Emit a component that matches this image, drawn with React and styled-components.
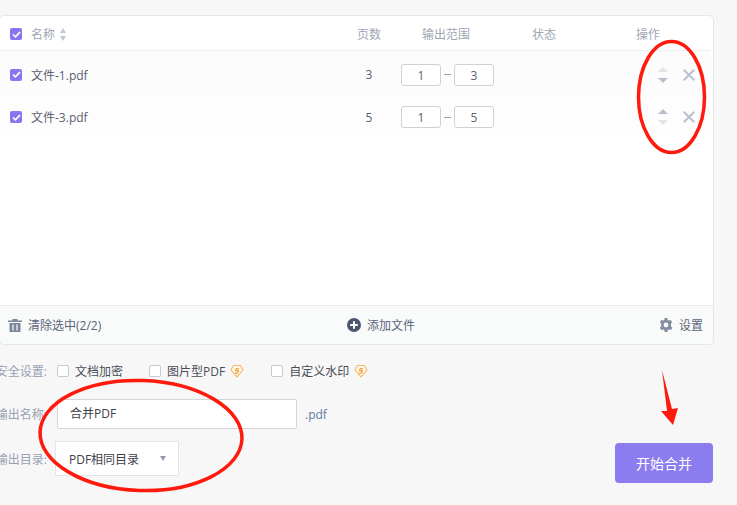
import React from "react";
import styled, { createGlobalStyle } from "styled-components";

const Global = createGlobalStyle`
  html, body { margin: 0; padding: 0; background: #f7f7f7; overflow: hidden; }
  body { font-family: "Open Sans", "Noto Sans CJK SC", "Noto Sans", sans-serif; }
`;

const Page = styled.div`
  position: relative;
  width: 737px;
  height: 505px;
  overflow: hidden;
  padding-top: 15px;
  box-sizing: border-box;
`;

const Card = styled.section`
  margin-left: -1px;
  width: 715px;
  height: 330px;
  box-sizing: border-box;
  background: #fff;
  border: 1px solid #e6e7e9;
  border-radius: 5px;
  display: flex;
  flex-direction: column;
`;

const Table = styled.div`
  flex: 1;
  padding-right: 2px;
`;

const Columns = "10px 21px 309px 58px 96px 100px 108px";

const HeadRow = styled.div`
  display: grid;
  grid-template-columns: ${Columns};
  align-items: center;
  height: 35px;
  box-sizing: border-box;
  padding-top: 2px;
  border-bottom: 1px solid #eeeff1;
  font-size: 12px;
  color: #a0a6b4;
`;

const BodyRow = styled.div`
  display: grid;
  grid-template-columns: ${Columns};
  align-items: center;
  height: ${(p) => p.$h}px;
  box-sizing: border-box;
  padding-top: 4px;
  background: ${(p) => p.$bg};
  font-size: 12px;
  color: #5b6070;
`;

const CheckCell = styled.div`
  grid-column: 2;
  display: flex;
`;

const Box = styled.span`
  width: 12px;
  height: 12px;
  border-radius: 2px;
  background: #8c74f1;
  display: flex;
  align-items: center;
  justify-content: center;
`;

const NameCell = styled.div`
  display: flex;
  align-items: center;
  gap: 5px;
`;

const Center = styled.div`
  text-align: center;
`;

const RangeCell = styled.div`
  display: flex;
  align-items: center;
  padding-left: 3px;
`;

const RangeInput = styled.div`
  width: 40px;
  height: 22px;
  box-sizing: border-box;
  border: 1px solid #cfd1d6;
  border-radius: 3px;
  background: #fff;
  text-align: center;
  line-height: 21px;
  color: #5b6070;
`;

const Dash = styled.span`
  width: 13px;
  display: flex;
  justify-content: center;
  &::before {
    content: "";
    width: 7px;
    height: 1px;
    background: #9a9eaa;
  }
`;

const Ops = styled.div`
  display: flex;
  align-items: center;
  padding-left: 64px;
  gap: 15px;
`;

const Sort = styled.div`
  display: flex;
  flex-direction: column;
  gap: 6px;
`;

const Tri = styled.span`
  width: 0;
  height: 0;
  border-left: 5px solid transparent;
  border-right: 5px solid transparent;
  ${(p) => (p.$down ? "border-top" : "border-bottom")}: 5px solid ${(p) => p.$c};
`;

const MiniSort = styled.div`
  display: flex;
  flex-direction: column;
  gap: 3px;
`;

const MiniTri = styled.span`
  width: 0;
  height: 0;
  border-left: 3.5px solid transparent;
  border-right: 3.5px solid transparent;
  ${(p) => (p.$down ? "border-top" : "border-bottom")}: 5px solid #c3c7d4;
`;

const Footer = styled.div`
  height: 39px;
  box-sizing: border-box;
  border-top: 1px solid #e8e9eb;
  border-radius: 0 0 5px 5px;
  background: #f9fafa;
  display: grid;
  grid-template-columns: 339px 1fr auto;
  align-items: center;
  padding-left: 8px;
  padding-right: 10px;
  font-size: 12px;
  color: #5a6478;
`;

const FootItem = styled.div`
  display: flex;
  align-items: center;
  gap: ${(p) => p.$gap}px;
`;

const Bottom = styled.div`
  display: flex;
  justify-content: space-between;
  align-items: flex-end;
  padding-right: 24px;
`;

const Form = styled.div`
  display: flex;
  flex-direction: column;
`;

const FormRow = styled.div`
  display: flex;
  align-items: center;
  height: ${(p) => p.$h}px;
  margin-top: ${(p) => p.$mt}px;
  font-size: 12px;
`;

const Label = styled.div`
  width: 47px;
  margin-right: 10px;
  display: flex;
  justify-content: flex-end;
  white-space: nowrap;
  color: #98a0b3;
`;

const Option = styled.div`
  display: flex;
  align-items: center;
  margin-right: ${(p) => p.$mr}px;
  color: #4a4d57;
`;

const EmptyBox = styled.span`
  width: 12px;
  height: 12px;
  box-sizing: border-box;
  border: 1px solid #c5c9d6;
  border-radius: 2px;
  background: #fff;
  margin-right: 6px;
`;

const Badge = styled.svg`
  margin-left: 5px;
`;

const NameInput = styled.div`
  width: 240px;
  height: 30px;
  box-sizing: border-box;
  border: 1px solid #d4d6da;
  border-radius: 2px;
  background: #fff;
  padding-left: 12px;
  line-height: 28px;
  color: #3e4049;
`;

const Ext = styled.span`
  margin-left: 8px;
  color: #5c7a9f;
`;

const Select = styled.div`
  width: 124px;
  height: 35px;
  box-sizing: border-box;
  border: 1px solid #e3e4e6;
  background: #fff;
  margin-left: -2px;
  padding: 0 12px 0 13px;
  display: flex;
  align-items: center;
  justify-content: space-between;
  color: #3e4049;
`;

const Caret = styled.span`
  width: 0;
  height: 0;
  border-left: 3.5px solid transparent;
  border-right: 3.5px solid transparent;
  border-top: 5px solid #9499a8;
`;

const StartButton = styled.button`
  width: 98px;
  height: 40px;
  border: none;
  border-radius: 4px;
  background: #8b7cf0;
  color: #fff;
  font: inherit;
  font-size: 14px;
  padding: 0;
  margin-bottom: -7px;
`;

const Markup = styled.svg`
  position: absolute;
  left: 0;
  top: 0;
  pointer-events: none;
`;

const Check = () => (
  <svg width="9" height="7" viewBox="0 0 9 7">
    <path d="M1 3.5 3.4 5.8 8 1.2" fill="none" stroke="#fff" strokeWidth="1.7" />
  </svg>
);

const CheckBox = () => (
  <CheckCell>
    <Box>
      <Check />
    </Box>
  </CheckCell>
);

const Close = () => (
  <svg width="12" height="12" viewBox="0 0 12 12">
    <path d="M.8.8 11.2 11.2M11.2.8.8 11.2" stroke="#b9bfd0" strokeWidth="2" />
  </svg>
);

const Coin = () => (
  <Badge width="14" height="14" viewBox="0 0 14 14">
    <path d="M3.6 1.5h6.800L13 6 7 12.800 1 6z" fill="#fff8ec" stroke="#f4b564" strokeWidth="1.100" strokeLinejoin="round" />
    <path d="M9 4.600H6.200L5.600 6.600H8.400L7.400 9.200H5" fill="none" stroke="#f0a63f" strokeWidth="1.300" />
  </Badge>
);

const Row = ({ name, pages, h, bg, upColor, downColor }) => (
  <BodyRow $h={h} $bg={bg}>
    <CheckBox />
    <div>{name}</div>
    <Center>{pages}</Center>
    <RangeCell>
      <RangeInput>1</RangeInput>
      <Dash />
      <RangeInput>{pages}</RangeInput>
    </RangeCell>
    <div />
    <Ops>
      <Sort>
        <Tri $c={upColor} />
        <Tri $down $c={downColor} />
      </Sort>
      <Close />
    </Ops>
  </BodyRow>
);

export default function App() {
  return (
    <Page>
      <Global />
      <Card>
        <Table>
          <HeadRow>
            <CheckBox />
            <NameCell>
              名称
              <MiniSort>
                <MiniTri />
                <MiniTri $down />
              </MiniSort>
            </NameCell>
            <Center>页数</Center>
            <Center>输出范围</Center>
            <Center>状态</Center>
            <Center>操作</Center>
          </HeadRow>
          <Row name="文件-1.pdf" pages="3" h={43} bg="#fcfcfc" upColor="#e3e4ea" downColor="#b9bdd0" />
          <Row name="文件-3.pdf" pages="5" h={42} bg="#fdfdfd" upColor="#b9bdd0" downColor="#e3e4ea" />
        </Table>
        <Footer>
          <FootItem $gap={6}>
            <svg width="14" height="14" viewBox="0 0 14 14">
              <path d="M0 2.500h14v1.500H0zM4.500 1h5v1.500h-5zM1.500 5h11v9h-11z" fill="#7d879c" />
              <path d="M5 6.500v6M9 6.500v6" stroke="#f9fafa" strokeWidth="1.200" />
            </svg>
            清除选中(2/2)
          </FootItem>
          <FootItem $gap={6}>
            <svg width="14" height="14" viewBox="0 0 14 14">
              <circle cx="7" cy="7" r="7" fill="#4c5670" />
              <path d="M7 3.200v7.600M3.200 7h7.600" stroke="#fff" strokeWidth="2" />
            </svg>
            添加文件
          </FootItem>
          <FootItem $gap={6}>
            <svg width="14" height="14" viewBox="0 0 14 14">
              <path
                d="M5.700 0h2.600l.4 1.900 1.200.7 1.900-.6 1.300 2.200L12 5.500V8.500l1.400 1.300-1.300 2.200-1.900-.6-1.200.7L8.300 14H5.700l-.4-1.900-1.200-.7-1.900.6L.9 9.800 2.200 8.500V5.500L.9 4.200 2.200 2l1.900.6 1.200-.7z"
                fill="#848da2"
              />
              <circle cx="7" cy="7" r="2.400" fill="#f9fafa" />
            </svg>
            设置
          </FootItem>
        </Footer>
      </Card>
      <Bottom>
        <Form>
          <FormRow $h={24} $mt={14}>
            <Label>安全设置:</Label>
            <Option $mr={26}>
              <EmptyBox />
              文档加密
            </Option>
            <Option $mr={27}>
              <EmptyBox />
              图片型PDF
              <Coin />
            </Option>
            <Option $mr={0}>
              <EmptyBox />
              自定义水印
              <Coin />
            </Option>
          </FormRow>
          <FormRow $h={30} $mt={16}>
            <Label>输出名称:</Label>
            <NameInput>合并PDF</NameInput>
            <Ext>.pdf</Ext>
          </FormRow>
          <FormRow $h={35} $mt={12}>
            <Label>输出目录:</Label>
            <Select>
              PDF相同目录
              <Caret />
            </Select>
          </FormRow>
        </Form>
        <StartButton>开始合并</StartButton>
      </Bottom>
      <Markup width="737" height="505" viewBox="0 0 737 505">
        <ellipse cx="671.500" cy="97" rx="33" ry="55.500" fill="none" stroke="#ff1a0d" strokeWidth="3.500" />
        <ellipse cx="141" cy="435.500" rx="101" ry="55" fill="none" stroke="#ff1a0d" strokeWidth="3.500" transform="rotate(2 141 435.500)" />
        <path d="M662 370 672 409 678 408 673 425 661 411 667 411Z" fill="#ff1a0d" />
      </Markup>
    </Page>
  );
}
